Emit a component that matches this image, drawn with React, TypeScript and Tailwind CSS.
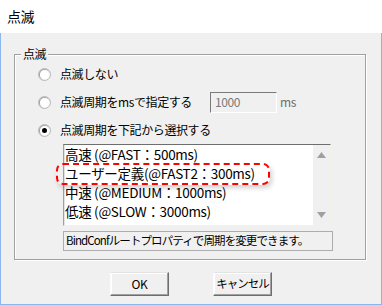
import React from "react"

const items = [
  "高速 (@FAST：500ms)",
  "ユーザー定義(@FAST2：300ms)",
  "中速 (@MEDIUM：1000ms)",
  "低速 (@SLOW：3000ms)",
]

function Radio({ checked }: { checked?: boolean }) {
  return (
    <span className="w-[13px] h-[13px] rounded-full border border-[#b8b8b8] bg-gradient-to-br from-[#dcdcdc] to-white shadow-[inset_1px_1px_1px_#9a9a9a] flex items-center justify-center shrink-0">
      <span className="w-[9px] h-[9px] rounded-full bg-white flex items-center justify-center">
        {checked && <span className="w-[5px] h-[5px] rounded-full bg-black" />}
      </span>
    </span>
  )
}

function Arrow({ down }: { down?: boolean }) {
  return (
    <svg width="9" height="6" viewBox="0 0 9 6">
      <path d={down ? "M0 0H9L4.5 6Z" : "M4.5 0L9 6H0Z"} fill="#a0a0a0" />
    </svg>
  )
}

export default function App() {
  return (
    <div className="w-[382px] h-[305px] flex flex-col bg-[#f0f0f0] text-[12px] text-black font-['Noto_Sans_CJK_JP',sans-serif] tracking-[-0.4px]">
      <div className="h-[33px] bg-white flex items-center pl-[7px] text-[14px] shrink-0">点滅</div>

      <div className="flex-1 flex flex-col border-x border-b border-[#8ab8ec]">
        {/* group box */}
        <div className="relative ml-[13px] mt-[21px] w-[352px] border border-[#a0a0a0] shadow-[1px_1px_0_#fff,inset_1px_1px_0_#fff] pt-[5px] pb-[8px]">
          <span className="absolute -top-[9px] left-[6px] px-[2px] bg-[#f0f0f0] leading-[16px]">点滅</span>

          <div className="h-[28px] flex items-center pl-[23px] gap-[9px]">
            <Radio />
            <span>点滅しない</span>
          </div>

          <div className="h-[28px] flex items-center pl-[23px]">
            <Radio />
            <span className="ml-[9px] w-[150px]">点滅周期をmsで指定する</span>
            <div className="w-[67px] h-[21px] border border-t-[#7a7a7a] border-l-[#7a7a7a] border-b-white border-r-white bg-[#f0f0f0] flex items-center pl-[4px] text-[#7a7a7a]">
              1000
            </div>
            <span className="ml-[3px] text-[#6d6d6d]">ms</span>
          </div>

          <div className="h-[28px] flex items-center pl-[23px] gap-[9px]">
            <Radio checked />
            <span>点滅周期を下記から選択する</span>
          </div>

          {/* list box */}
          <div className="relative ml-[48px] w-[268px] h-[82px] border border-t-[#6e6e6e] border-l-[#a0a0a0] border-b-[#f4f2e4] border-r-[#f4f2e4] shadow-[inset_1px_0_0_#e3e3e3] bg-white flex">
            <div className="flex-1 flex flex-col pl-[1px] text-[13.5px] tracking-[-0.3px]">
              {items.map((item) => (
                <div key={item} className="h-[19px] leading-[19px] whitespace-nowrap">
                  {item}
                </div>
              ))}
            </div>
            <div className="w-[17px] bg-[#f0f0f0] flex flex-col items-center justify-between py-[7px]">
              <Arrow />
              <Arrow down />
            </div>
            <div className="absolute left-[-8px] top-[18px] w-[214px] h-[22px] border-2 border-dashed border-[#f00] rounded-[7px] shadow-[2px_3px_5px_rgba(0,0,0,0.18)]" />
          </div>

          {/* status line */}
          <div className="ml-[48px] mt-[5px] w-[270px] h-[20px] border border-[#adadad] flex items-center pl-[2px] whitespace-nowrap text-[11.5px] tracking-[-0.9px]">
            BindConfルートプロパティで周期を変更できます。
          </div>
        </div>

        {/* buttons */}
        <div className="mt-[12px] flex justify-center gap-[44px]">
          <button className="w-[59px] h-[24px] border border-t-[#e3e3e3] border-l-[#fcfcfc] border-b-[#6e6e6e] border-r-[#6e6e6e] shadow-[inset_-1px_-1px_0_#a0a0a0,inset_1px_1px_0_#fff] bg-[#f0f0f0] text-[12px]">
            OK
          </button>
          <button className="w-[59px] h-[24px] px-0 whitespace-nowrap border border-t-[#e3e3e3] border-l-[#fcfcfc] border-b-[#6e6e6e] border-r-[#6e6e6e] shadow-[inset_-1px_-1px_0_#a0a0a0,inset_1px_1px_0_#fff] bg-[#f0f0f0] text-[11.5px] tracking-[-1px]">
            キャンセル
          </button>
        </div>
      </div>
    </div>
  )
}
